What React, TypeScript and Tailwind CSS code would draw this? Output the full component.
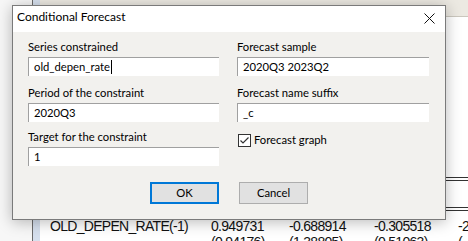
import React from "react";

const uiFont = { fontFamily: 'Lato, "Noto Sans", sans-serif' };
const tableFont = { fontFamily: '"Liberation Sans", Arial, sans-serif' };

type FieldProps = { label: string; value: string; caret?: boolean; className?: string };

const Field = ({ label, value, caret, className = "" }: FieldProps) => (
  <div className={"flex flex-col " + className}>
    <span className="h-[16px] text-[11.25px] leading-[16px] text-black">{label}</span>
    <div className="mt-[2px] flex h-[19px] items-center border-t border-l border-[#a0a0a0] bg-white pl-[5px] text-[11.25px] leading-[16px] text-black">
      {value}
      {caret && <span className="ml-px h-[14px] w-px bg-black" />}
    </div>
  </div>
);

const DataRow = ({ cells }: { cells: string[] }) => (
  <div className="flex h-[16px] text-[14px] leading-[16px] tracking-[-0.7px] text-[#111]">
    <span className="w-[171px] shrink-0 pl-[10px]">{cells[0]}</span>
    <span className="w-[78px] shrink-0">{cells[1]}</span>
    <span className="w-[85px] shrink-0">{cells[2]}</span>
    <span className="w-[84px] shrink-0">{cells[3]}</span>
    <span className="shrink-0">{cells[4]}</span>
  </div>
);

export default function App() {
  return (
    <div className="relative h-[241px] w-[468px] overflow-hidden bg-white">
      {/* window behind the dialog */}
      <div className="flex h-full">
        <div className="w-[32px] shrink-0 bg-[#f7f7f7]" />
        <div className="w-px shrink-0 bg-[#6b6b6b]" />
        <div className="w-[7px] shrink-0 bg-[#d6e0ee]" />
        <div className="flex flex-1 flex-col" style={tableFont}>
          <div className="h-[17px] shrink-0 border-b border-[#cbc7be] bg-[#ece9e2]" />
          <div className="mt-[160px] h-[4px] shrink-0 border-y border-[#333]" />
          <div className="mt-[26px] h-[4px] shrink-0 border-y border-[#333]" />
          <div className="mt-[7px] shrink-0">
            <DataRow cells={["OLD_DEPEN_RATE(-1)", "0.949731", "-0.688914", "-0.305518", "-2"]} />
            <DataRow cells={["", "(0.94176)", "(1.38805)", "(0.51063)", "("]} />
          </div>
        </div>
      </div>

      {/* Conditional Forecast dialog */}
      <div
        className="absolute left-[12px] top-[5px] flex h-[215px] w-[434px] flex-col border border-[#7a7a7a] bg-[#f2f1ee] shadow-[0_2px_14px_rgba(0,0,0,0.28)]"
        style={uiFont}
      >
        <div className="flex h-[26px] shrink-0 items-start justify-between bg-white pl-[4px] pt-[3px]">
          <span className="text-[12px] leading-[16px] text-black">Conditional Forecast</span>
          <svg width="11" height="11" viewBox="0 0 11 11" className="mr-[10px] mt-[4px]">
            <path d="M0.5 0.5 L10.5 10.5 M10.5 0.5 L0.5 10.5" stroke="#111" strokeWidth="1" />
          </svg>
        </div>

        <div className="flex gap-x-[18px] pl-[15px] pt-[7px]">
          <div className="flex w-[191px] flex-col">
            <Field label="Series constrained" value="old_depen_rate" caret />
            <Field label="Period of the constraint" value="2020Q3" className="mt-[9px]" />
            <Field label="Target for the constraint" value="1" className="mt-[7px]" />
          </div>
          <div className="flex w-[192px] flex-col">
            <Field label="Forecast sample" value="2020Q3 2023Q2" />
            <Field label="Forecast name suffix" value="_c" className="mt-[9px]" />
            <label className="ml-px mt-[10px] flex items-center gap-[3px] text-[11.25px] leading-[16px] text-black">
              <svg width="13" height="13" viewBox="0 0 13 13">
                <rect x="0.5" y="0.5" width="12" height="12" fill="#fff" stroke="#333" />
                <path d="M2.5 6.5 L5 9 L10.5 3.5" fill="none" stroke="#333" strokeWidth="1.2" />
              </svg>
              Forecast graph
            </label>
          </div>
        </div>

        <div className="mt-[16px] flex justify-center gap-[20px]">
          <button className="flex h-[22px] w-[69px] items-center justify-center border-2 border-[#0078d7] bg-[#e1e1e1] text-[11.25px] leading-[16px] text-black">
            OK
          </button>
          <button className="flex h-[22px] w-[69px] items-center justify-center border border-[#adadad] bg-[#e1e1e1] text-[11.25px] leading-[16px] text-black">
            Cancel
          </button>
        </div>
      </div>
    </div>
  );
}
